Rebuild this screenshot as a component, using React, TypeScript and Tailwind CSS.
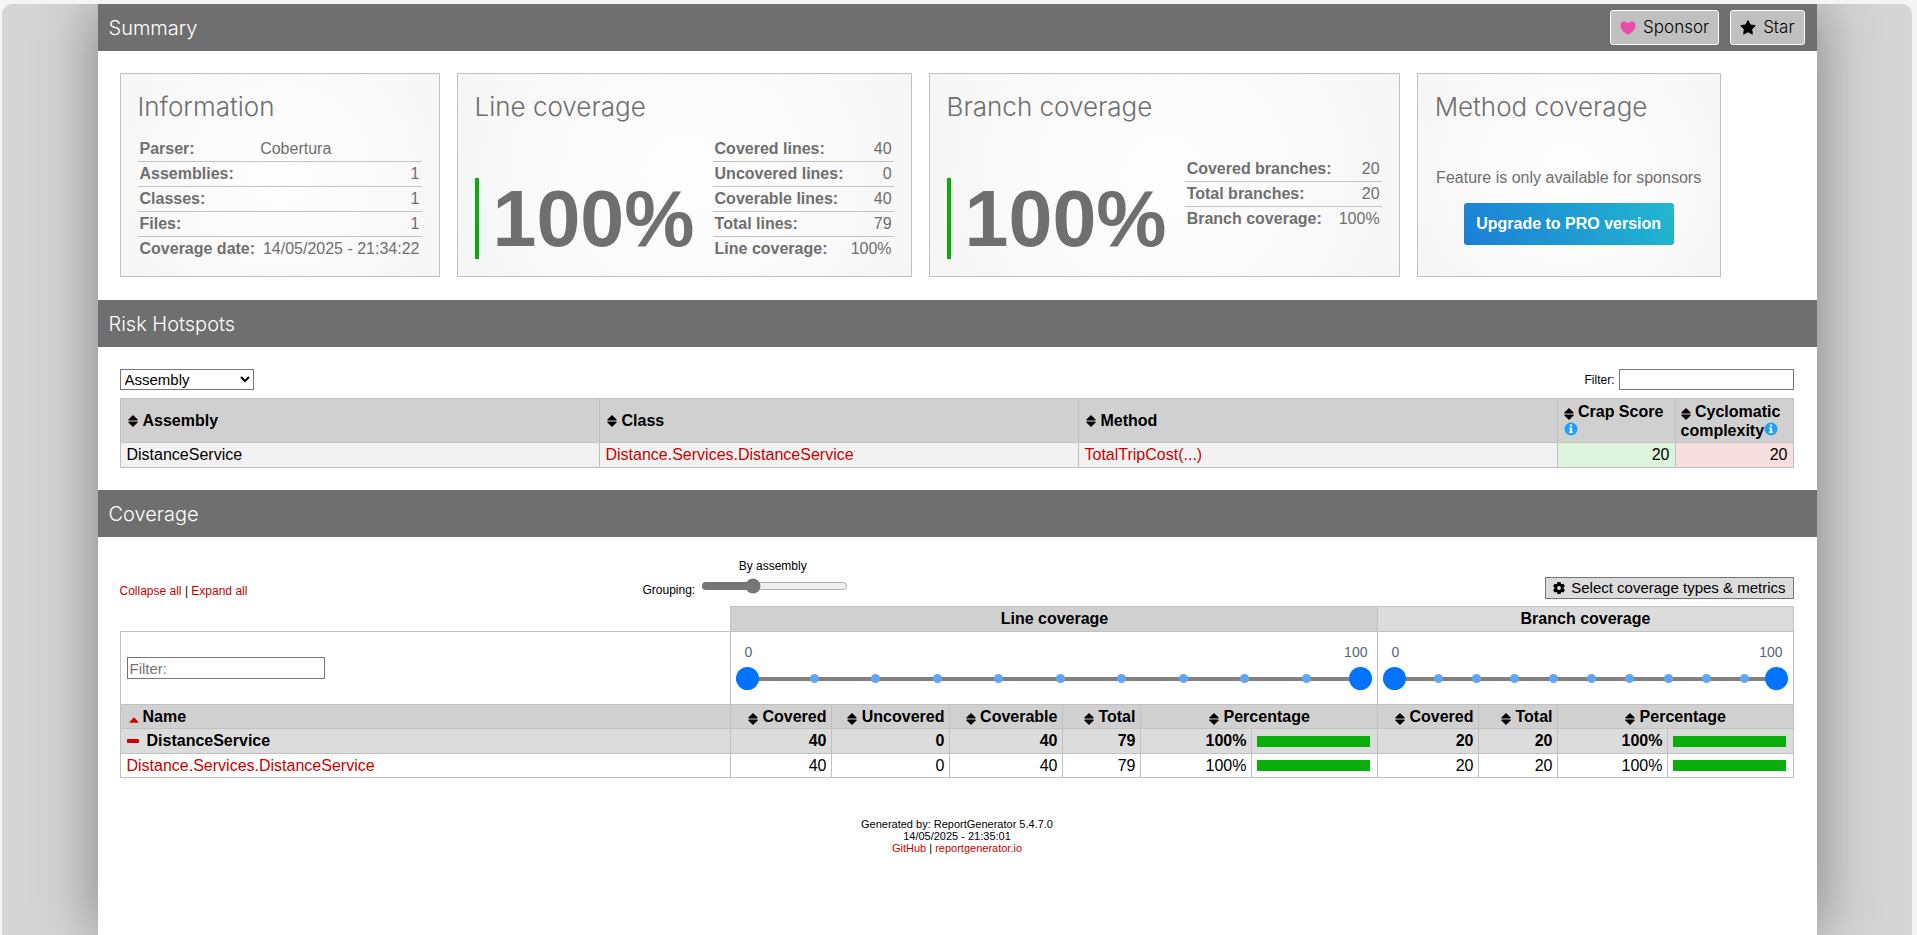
import React from "react";

function SortIcon() {
  return (
    <svg width="10" height="12" viewBox="0 0 10 12" className="inline-block shrink-0 align-[-3px]" aria-hidden="true">
      <path d="M5 0 9.6 4.4Q10 5.4 9 5.4H1Q0 5.4 0.4 4.4Z" />
      <path d="M5 12 9.6 7.6Q10 6.6 9 6.6H1Q0 6.6 0.4 7.6Z" />
    </svg>
  );
}

function InfoIcon() {
  return (
    <svg width="14" height="14" viewBox="0 0 14 14" className="inline-block align-[0px]" role="img" aria-label="Info">
      <circle cx="7" cy="7" r="6.5" fill="#1ba1f8" />
      <path fill="#fff" d="M5.9 2.4h2.2v1.9H5.9zM5 5.4h3.1v4.2h.9v1.4H5V9.6h.9V6.8H5z" />
    </svg>
  );
}

function HeartIcon() {
  return (
    <svg width="16" height="16" viewBox="0 0 16 16" fill="#ea4aaa" aria-hidden="true">
      <path d="M7.65 14.7A22 22 0 0 1 3.6 11.8C2 10.3.4 8.1.4 5.6.4 3 2.2 1.4 4.3 1.4c1.5 0 2.9.8 3.7 2.1.8-1.3 2.2-2.1 3.7-2.1 2.1 0 3.9 1.6 3.9 4.2 0 2.5-1.6 4.7-3.2 6.2a22 22 0 0 1-4.4 3z" />
    </svg>
  );
}

function StarIcon() {
  return (
    <svg width="16" height="16" viewBox="0 0 16 16" aria-hidden="true">
      <path d="M8 .25a.75.75 0 0 1 .673.418l1.882 3.815 4.21.612a.75.75 0 0 1 .416 1.279l-3.046 2.97.719 4.192a.751.751 0 0 1-1.088.791L8 12.347l-3.766 1.98a.75.75 0 0 1-1.088-.79l.72-4.194L.818 6.374a.75.75 0 0 1 .416-1.28l4.21-.611L7.327.668A.75.75 0 0 1 8 .25Z" />
    </svg>
  );
}

function GearIcon() {
  return (
    <svg width="12" height="12" viewBox="0 0 14 14" aria-hidden="true">
      <path
        fillRule="evenodd"
        d="M5.2 0h3.6l.4 1.9 1 .6 1.9-.6 1.8 3-1.5 1.3v1.6l1.5 1.4-1.8 3-1.9-.6-1 .6-.4 1.9H5.2l-.4-1.9-1-.6-1.9.6-1.8-3 1.5-1.4V6.2L.1 4.9l1.8-3 1.9.6 1-.6zM7 4.8a2.2 2.2 0 1 0 0 4.4 2.2 2.2 0 0 0 0-4.4z"
      />
    </svg>
  );
}

const gothic = "font-['Century_Gothic','Inter',sans-serif] font-light";

function Bar({ title, children }: { title: string; children?: React.ReactNode }) {
  return (
    <header className="flex h-[47px] items-center justify-between bg-[#6f6f6f] pr-3 pl-[11px] text-white">
      <h1 className={gothic + " text-[20px] leading-6"}>{title}</h1>
      {children && <div className="flex gap-[11px]">{children}</div>}
    </header>
  );
}

function Card({ title, children }: { title: string; children: React.ReactNode }) {
  return (
    <section className="flex h-[204px] flex-col border border-[#c1c1c1] bg-[radial-gradient(circle,#fefefe,#f6f6f6)] px-[17px] pt-[17px] text-[#6f6f6f]">
      <h2 className={gothic + " text-[26px] leading-8"}>{title}</h2>
      {children}
    </section>
  );
}

function Facts({ rows, className }: { rows: [string, string][]; className: string }) {
  return (
    <table className={"border-collapse text-base leading-6 " + className}>
      <tbody>
        {rows.map(([label, value]) => (
          <tr key={label} className="border-b border-[#c1c1c1] last:border-0">
            <th scope="row" className="p-0 pl-[2px] text-left font-bold whitespace-nowrap">{label}</th>
            <td className={"p-0 pr-[2px] pl-[3px] whitespace-nowrap " + (value === "Cobertura" ? "text-left" : "text-right")}>{value}</td>
          </tr>
        ))}
      </tbody>
    </table>
  );
}

function BigValue({ value }: { value: string }) {
  return (
    <div className="mt-[55px] mr-[18px] h-[81px] border-l-4 border-[#0aad0a] pl-[14px] text-[79px] leading-[81px] font-bold">
      {value}
    </div>
  );
}

const thumb =
  "pointer-events-none absolute inset-x-0 top-0 h-[23px] w-full appearance-none bg-transparent [&::-webkit-slider-thumb]:pointer-events-auto [&::-webkit-slider-thumb]:size-[23px] [&::-webkit-slider-thumb]:appearance-none [&::-webkit-slider-thumb]:rounded-full [&::-webkit-slider-thumb]:bg-[#0073ff]";

function RangeFilter({ name }: { name: string }) {
  return (
    <div className="pb-[2px]">
      <div className="flex justify-between pr-[5px] pl-2 text-sm leading-4 text-[#55637d]">
        <span>0</span>
        <span>100</span>
      </div>
      <div className="relative mt-[7px] flex h-[23px] items-center">
        <div className="h-1 w-full bg-[#808080]" />
        <div className="absolute inset-y-0 right-0 left-3 flex items-center justify-between">
          {Array.from({ length: 11 }, (_, i) => (
            <span key={i} className="size-[9px] rounded-full bg-[#62a5f4]" />
          ))}
        </div>
        <input type="range" min={0} max={100} defaultValue={0} aria-label={name + " minimum"} className={thumb} />
        <input type="range" min={0} max={100} defaultValue={100} aria-label={name + " maximum"} className={thumb} />
      </div>
    </div>
  );
}

const cell = "border border-[#c1c1c1] px-[5px] py-0";
const red = "text-[#c00]";

function Sortable({ children }: { children: string }) {
  return (
    <a href="#sort" className="whitespace-nowrap">
      <SortIcon /> {children}
    </a>
  );
}

const metrics = ["Covered", "Uncovered", "Coverable", "Total"];

function PercentBar() {
  return <div className="h-[11px] w-[113px] bg-[#0aad0a]" />;
}

function CoverageTable() {
  const rows = [
    { bold: true, cls: "bg-[#dcdcdc] font-bold leading-6" },
    { bold: false, cls: "bg-white leading-[23px]" },
  ];
  return (
    <table className="mt-[7px] w-full table-fixed border-collapse text-base leading-6">
      <colgroup>
        <col />
        <col className="w-[101px]" />
        <col className="w-[118px]" />
        <col className="w-[113px]" />
        <col className="w-[78px]" />
        <col className="w-[111px]" />
        <col className="w-[126px]" />
        <col className="w-[101px]" />
        <col className="w-[79px]" />
        <col className="w-[110px]" />
        <col className="w-[125px]" />
      </colgroup>
      <thead>
        <tr>
          <td />
          <th colSpan={6} className={cell + " bg-[#d0d0d0]"}>Line coverage</th>
          <th colSpan={4} className={cell + " bg-[#dcdcdc]"}>Branch coverage</th>
        </tr>
        <tr className="h-[73px]">
          <td className={cell + " pl-[6px]"}>
            <input
              type="text"
              placeholder="Filter:"
              aria-label="Filter"
              className="block h-[22px] w-[198px] border border-[#767676] px-[2px] text-[15px] leading-5 placeholder:text-[#757575]"
            />
          </td>
          <td colSpan={6} className={cell}><RangeFilter name="Line coverage" /></td>
          <td colSpan={4} className={cell}><RangeFilter name="Branch coverage" /></td>
        </tr>
        <tr className="bg-[#d0d0d0] leading-[23px]">
          <th className={cell + " text-left"}>
            <a href="#sort" className="flex items-center pl-[3px]">
              <svg width="10" height="6" viewBox="0 0 10 6" fill="#c00" className="mt-[6px] mr-1" aria-hidden="true">
                <path d="M5 .2 9.4 5Q9.6 5.8 9 5.8H1Q.4 5.8.6 5Z" />
              </svg>
              Name
            </a>
          </th>
          {metrics.map((m) => (
            <th key={m} className={cell + " text-right"}><Sortable>{m}</Sortable></th>
          ))}
          <th colSpan={2} className={cell}><Sortable>Percentage</Sortable></th>
          <th className={cell + " text-right"}><Sortable>Covered</Sortable></th>
          <th className={cell + " text-right"}><Sortable>Total</Sortable></th>
          <th colSpan={2} className={cell}><Sortable>Percentage</Sortable></th>
        </tr>
      </thead>
      <tbody>
        {rows.map((r) => (
          <tr key={String(r.bold)} className={r.cls}>
            <th scope="row" className={cell + " pl-[6px] text-left " + (r.bold ? "" : "font-normal")}>
              {r.bold ? (
                <button type="button" className="flex items-center gap-2">
                  <span className="h-1 w-3 rounded-[1px] bg-[#c00]" />
                  DistanceService
                </button>
              ) : (
                <a href="#distance-service" className={red}>Distance.Services.DistanceService</a>
              )}
            </th>
            {["40", "0", "40", "79", "100%"].map((v, i) => (
              <td key={i} className={cell + " text-right"}>{v}</td>
            ))}
            <td className={cell + " px-1"}><PercentBar /></td>
            {["20", "20", "100%"].map((v, i) => (
              <td key={i} className={cell + " text-right"}>{v}</td>
            ))}
            <td className={cell + " px-1"}><PercentBar /></td>
          </tr>
        ))}
      </tbody>
    </table>
  );
}

export default function App() {
  return (
    <div className="min-h-screen bg-[#f5f5f5] pt-1 pr-[5px] pl-[2px] font-['Liberation_Sans',Arial,sans-serif] text-black">
      <div className="flex h-[calc(100vh-4px)] justify-center overflow-hidden rounded-t-[10px] bg-[#d6d6d6]">
        <main className="h-full w-[90%] bg-white shadow-[0_0_60px_#7d7d7d]">
          <Bar title="Summary">
            <a href="#sponsor" className={gothic + " flex h-[35px] items-center gap-[7px] rounded-[3px] border border-white bg-[#c0c0c0] px-[9px] text-[17px] text-black"}>
              <HeartIcon /> Sponsor
            </a>
            <a href="#star" className={gothic + " flex h-[35px] items-center gap-[7px] rounded-[3px] border border-white bg-[#c0c0c0] px-[9px] text-[17px] text-black"}>
              <StarIcon /> Star
            </a>
          </Bar>

          <div className="flex flex-wrap gap-[17px] px-[22px] pt-[22px] pb-[23px]">
            <Card title="Information">
              <Facts
                className="mt-[14px] w-[284px]"
                rows={[
                  ["Parser:", "Cobertura"],
                  ["Assemblies:", "1"],
                  ["Classes:", "1"],
                  ["Files:", "1"],
                  ["Coverage date:", "14/05/2025 - 21:34:22"],
                ]}
              />
            </Card>
            <Card title="Line coverage">
              <div className="flex items-start">
                <BigValue value="100%" />
                <Facts
                  className="mt-[14px] w-[181px]"
                  rows={[
                    ["Covered lines:", "40"],
                    ["Uncovered lines:", "0"],
                    ["Coverable lines:", "40"],
                    ["Total lines:", "79"],
                    ["Line coverage:", "100%"],
                  ]}
                />
              </div>
            </Card>
            <Card title="Branch coverage">
              <div className="flex items-start">
                <BigValue value="100%" />
                <Facts
                  className="mt-[34px] w-[197px]"
                  rows={[
                    ["Covered branches:", "20"],
                    ["Total branches:", "20"],
                    ["Branch coverage:", "100%"],
                  ]}
                />
              </div>
            </Card>
            <Card title="Method coverage">
              <div className="flex w-[268px] flex-col items-center pt-[43px] text-base leading-6">
                <p>Feature is only available for sponsors</p>
                <a href="#pro" className="mt-[13px] flex h-[42px] w-[210px] items-center justify-center rounded-[3px] bg-[linear-gradient(60deg,#1c7ed6,#22b8cf)] font-bold text-white">
                  Upgrade to PRO version
                </a>
              </div>
            </Card>
          </div>

          <Bar title="Risk Hotspots" />
          <div className="px-[22px] pt-[22px] pr-[23px] pb-[22px]">
            <div className="flex items-center justify-between">
              <select aria-label="Grouping of hotspots" className="h-[21px] w-[134px] border border-[#767676] bg-white text-[15px] leading-5">
                <option>Assembly</option>
              </select>
              <label className="flex items-center gap-1 text-xs">
                Filter:
                <input type="text" className="h-[21px] w-[175px] border border-[#767676]" />
              </label>
            </div>
            <table className="mt-2 w-full table-fixed border-collapse text-base">
              <colgroup>
                <col />
                <col />
                <col />
                <col className="w-[118px]" />
                <col className="w-[118px]" />
              </colgroup>
              <thead>
                <tr className="h-[44px] bg-[#d0d0d0] leading-[19px]">
                  {["Assembly", "Class", "Method"].map((h) => (
                    <th key={h} className={cell + " text-left"}>
                      <a href="#sort" className="flex items-center gap-[5px] pl-[2px]"><SortIcon />{h}</a>
                    </th>
                  ))}
                  <th className={cell + " pl-[6px] text-left"}><Sortable>Crap Score</Sortable> <InfoIcon /></th>
                  <th className={cell + " text-left"}><a href="#sort"><SortIcon /> Cyclomatic complexity</a><InfoIcon /></th>
                </tr>
              </thead>
              <tbody>
                <tr className="bg-[#f2f2f2] leading-6">
                  <td className={cell + " pl-[6px]"}>DistanceService</td>
                  <td className={cell + " pl-[6px]"}><a href="#class" className={red}>Distance.Services.DistanceService</a></td>
                  <td className={cell + " pl-[6px]"}><a href="#method" className={red}>TotalTripCost(...)</a></td>
                  <td className={cell + " bg-[#dcf4dc] text-right"}>20</td>
                  <td className={cell + " bg-[#f6dede] text-right"}>20</td>
                </tr>
              </tbody>
            </table>
          </div>

          <Bar title="Coverage" />
          <div className="px-[22px] pt-[22px] pr-[23px]">
            <div className="flex h-10 items-end justify-between text-xs">
              <div className="w-[523px]">
                <a href="#collapse" className={red}>Collapse all</a> | <a href="#expand" className={red}>Expand all</a>
              </div>
              <div className="flex grow items-end gap-1">
                <label htmlFor="grouping" className="pb-px">Grouping:</label>
                <div className="flex flex-col items-center gap-1">
                  <span className="pr-1">By assembly</span>
                  <input id="grouping" type="range" min={0} max={3} defaultValue={1} className="mx-[2px] mb-[5px] h-4 w-[147px] accent-[#767676]" />
                </div>
              </div>
              <button type="button" className="flex h-[22px] items-center gap-[6px] border border-[#767676] bg-[#dcdcdc] px-[7px] text-[15px] leading-5">
                <GearIcon /> Select coverage types &amp; metrics
              </button>
            </div>
            <CoverageTable />
          </div>

          <footer className="mt-10 text-center text-[11px] leading-3">
            Generated by: ReportGenerator 5.4.7.0
            <br />
            14/05/2025 - 21:35:01
            <br />
            <a href="#github" className={red}>GitHub</a> | <a href="#site" className={red}>reportgenerator.io</a>
          </footer>
        </main>
      </div>
    </div>
  );
}
